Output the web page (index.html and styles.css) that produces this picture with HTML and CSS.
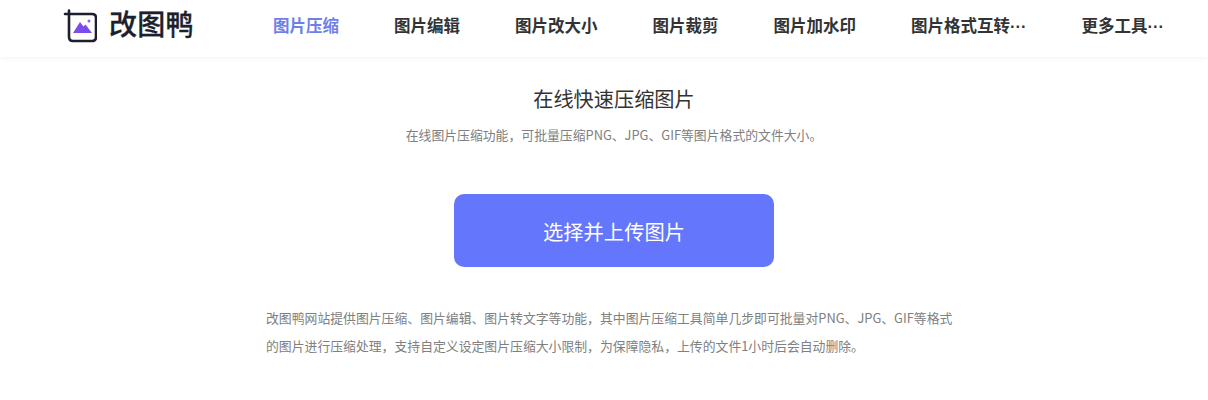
FILE: index.html
```html
<!DOCTYPE html>
<html lang="zh-CN">
<head>
<meta charset="utf-8">
<title>改图鸭</title>
<link rel="stylesheet" href="styles.css">
</head>
<body>
<header class="topbar">
  <a class="brand">
    <svg class="brand-icon" width="34" height="34" viewBox="0 0 34 34" fill="none">
      <path d="M6 1.500V28Q6 32 10 32H29Q33 32 33 28V9Q33 5 29 5H2" stroke="#1c1f2e" stroke-width="2.600" stroke-linecap="round"/>
      <path d="M10 24L17 13L20.500 17.500L22.500 15.500L29 24Z" fill="#7c4dea"/>
      <circle cx="26" cy="12" r="1.500" fill="#8a63e8"/>
    </svg>
    <span class="brand-name">改图鸭</span>
  </a>
  <nav class="nav">
    <a class="nav-item active">图片压缩</a>
    <a class="nav-item">图片编辑</a>
    <a class="nav-item">图片改大小</a>
    <a class="nav-item">图片裁剪</a>
    <a class="nav-item">图片加水印</a>
    <a class="nav-item">图片格式互转···</a>
    <a class="nav-item">更多工具···</a>
  </nav>
</header>
<main class="main">
  <h1 class="title">在线快速压缩图片</h1>
  <p class="subtitle">在线图片压缩功能，可批量压缩PNG、JPG、GIF等图片格式的文件大小。</p>
  <button class="upload">选择并上传图片</button>
  <p class="desc">改图鸭网站提供图片压缩、图片编辑、图片转文字等功能，其中图片压缩工具简单几步即可批量对PNG、JPG、GIF等格式的图片进行压缩处理，支持自定义设定图片压缩大小限制，为保障隐私，上传的文件1小时后会自动删除。</p>
</main>
</body>
</html>
```
FILE: styles.css
```css
* { box-sizing: border-box; }
html, body { margin: 0; height: 400px; overflow: hidden; background: #fff; }
body { font-family: "Liberation Sans", "Noto Sans CJK SC", sans-serif; color: #333; }
.topbar {
  display: flex;
  align-items: center;
  height: 57px;
  padding-left: 63px;
  padding-bottom: 5px;
  box-shadow: 0 1px 6px rgba(0, 0, 0, 0.05);
}
.brand { display: flex; align-items: center; width: 210px; gap: 12px; }
.brand-icon { flex: none; }
.brand-name { font-size: 28px; font-weight: 500; -webkit-text-stroke: 0.300px #1c1f2e; color: #1c1f2e; letter-spacing: 0.200px; line-height: 34px; }
.nav { display: flex; gap: 55px; }
.nav-item { font-size: 16.500px; font-weight: 700; color: #333; line-height: 24px; white-space: nowrap; }
.nav-item.active { color: #6e7fe8; }
.main { display: flex; flex-direction: column; align-items: center; padding-left: 20px; }
.title { margin: 29px 0 0; font-size: 20.200px; font-weight: 400; line-height: 28px; color: #333; }
.subtitle { margin: 13px 0 0; font-family: "Noto Sans CJK SC", sans-serif; font-size: 12.850px; line-height: 16px; color: #808080; white-space: nowrap; }
.upload {
  width: 320px;
  height: 73px;
  margin-top: 51px;
  border: 0;
  border-radius: 10px;
  background: #6476fb;
  color: #fff;
  font: inherit;
  font-size: 20.300px;
}
.desc {
  width: 690px;
  margin: 37px 6px 0 0;
  font-family: "Noto Sans CJK SC", sans-serif;
  font-size: 12.850px;
  line-height: 28px;
  color: #808080;
}
```
